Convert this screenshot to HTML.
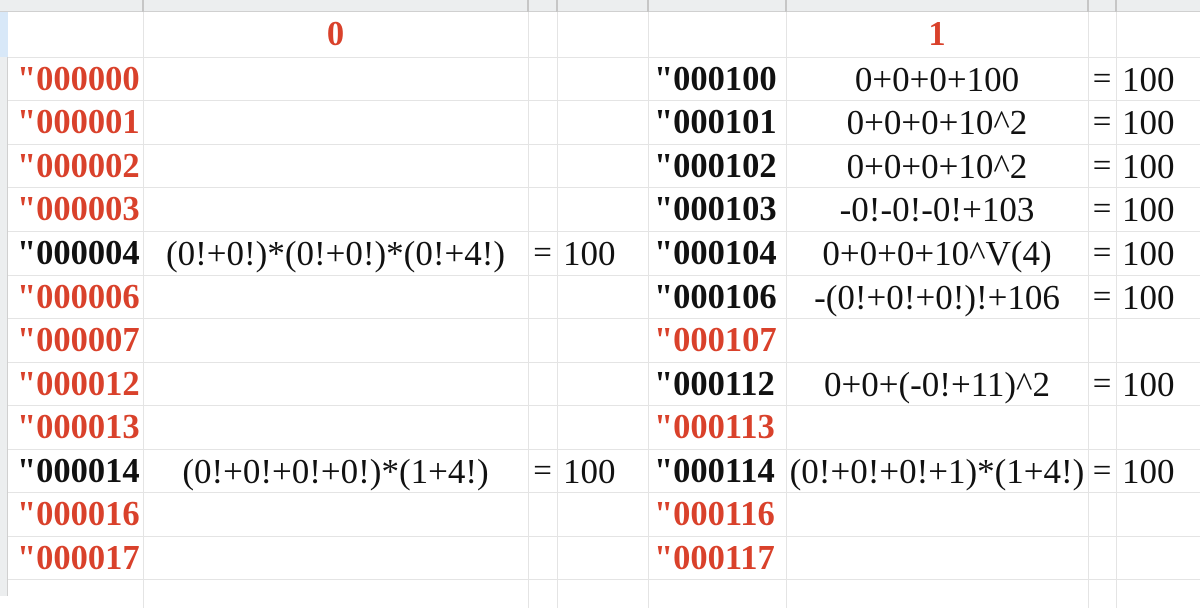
<!DOCTYPE html>
<html><head><meta charset="utf-8"><style>
*{margin:0;padding:0;box-sizing:border-box}
body{width:1200px;height:596px;overflow:hidden;background:#fff;position:relative;font-family:"Liberation Serif",serif;font-size:33px;color:#111}
.hdr{position:absolute;left:0;top:0;width:1200px;height:12px;background:#eceeef;border-bottom:1px solid #d0d0d0}
.rh{position:absolute;left:0;top:12px;width:8px;height:584px;background:#eceeef;border-right:1px solid #d0d0d0}
.vl{position:absolute;top:0;width:1px;height:596px;background:#e4e4e4}
.vh{position:absolute;top:0;width:2px;height:12px;background:#c6c6c6}
.hl{position:absolute;left:8px;width:1192px;height:1px;background:#e4e4e4}
.t{position:absolute;height:43px;line-height:45px;white-space:nowrap}
.f{font-size:35px}
.b{font-weight:bold;font-size:34.5px}
.r{color:#d9412b}
.c{text-align:center}
</style></head><body>
<div class="hdr"></div>
<div class="rh"></div>
<div style="position:absolute;left:0;top:12px;width:8px;height:45px;background:#d8e8f8"></div>
<div class="vh" style="left:142px"></div><div class="vh" style="left:527px"></div><div class="vh" style="left:556px"></div><div class="vh" style="left:647px"></div><div class="vh" style="left:785px"></div><div class="vh" style="left:1087px"></div><div class="vh" style="left:1115px"></div>
<div class="vl" style="left:143px;top:12px"></div><div class="vl" style="left:528px;top:12px"></div><div class="vl" style="left:557px;top:12px"></div><div class="vl" style="left:648px;top:12px"></div><div class="vl" style="left:786px;top:12px"></div><div class="vl" style="left:1088px;top:12px"></div><div class="vl" style="left:1116px;top:12px"></div>
<div class="hl" style="top:57px"></div><div class="hl" style="top:100px"></div><div class="hl" style="top:144px"></div><div class="hl" style="top:187px"></div><div class="hl" style="top:231px"></div><div class="hl" style="top:275px"></div><div class="hl" style="top:318px"></div><div class="hl" style="top:362px"></div><div class="hl" style="top:405px"></div><div class="hl" style="top:449px"></div><div class="hl" style="top:492px"></div><div class="hl" style="top:536px"></div><div class="hl" style="top:579px"></div>

<div class="t b r c" style="left:143px;width:385px;top:12px">0</div>
<div class="t b r c" style="left:786px;width:302px;top:12px">1</div>

<div class="t b r" style="left:17px;top:57px">"000000</div>
<div class="t b r" style="left:17px;top:100px">"000001</div>
<div class="t b r" style="left:17px;top:144px">"000002</div>
<div class="t b r" style="left:17px;top:187px">"000003</div>
<div class="t b" style="left:17px;top:231px">"000004</div>
<div class="t b r" style="left:17px;top:275px">"000006</div>
<div class="t b r" style="left:17px;top:318px">"000007</div>
<div class="t b r" style="left:17px;top:362px">"000012</div>
<div class="t b r" style="left:17px;top:405px">"000013</div>
<div class="t b" style="left:17px;top:449px">"000014</div>
<div class="t b r" style="left:17px;top:492px">"000016</div>
<div class="t b r" style="left:17px;top:536px">"000017</div>

<div class="t c f" style="left:143px;width:385px;top:231px">(0!+0!)*(0!+0!)*(0!+4!)</div>
<div class="t c" style="left:528px;width:29px;top:231px">=</div>
<div class="t f" style="left:563px;top:231px">100</div>
<div class="t c f" style="left:143px;width:385px;top:449px">(0!+0!+0!+0!)*(1+4!)</div>
<div class="t c" style="left:528px;width:29px;top:449px">=</div>
<div class="t f" style="left:563px;top:449px">100</div>

<div class="t b" style="left:654px;top:57px">"000100</div>
<div class="t b" style="left:654px;top:100px">"000101</div>
<div class="t b" style="left:654px;top:144px">"000102</div>
<div class="t b" style="left:654px;top:187px">"000103</div>
<div class="t b" style="left:654px;top:231px">"000104</div>
<div class="t b" style="left:654px;top:275px">"000106</div>
<div class="t b r" style="left:654px;top:318px">"000107</div>
<div class="t b" style="left:654px;top:362px">"000112</div>
<div class="t b r" style="left:654px;top:405px">"000113</div>
<div class="t b" style="left:654px;top:449px">"000114</div>
<div class="t b r" style="left:654px;top:492px">"000116</div>
<div class="t b r" style="left:654px;top:536px">"000117</div>

<div class="t c f" style="left:786px;width:302px;top:57px">0+0+0+100</div>
<div class="t c f" style="left:786px;width:302px;top:100px">0+0+0+10^2</div>
<div class="t c f" style="left:786px;width:302px;top:144px">0+0+0+10^2</div>
<div class="t c f" style="left:786px;width:302px;top:187px">-0!-0!-0!+103</div>
<div class="t c f" style="left:786px;width:302px;top:231px">0+0+0+10^V(4)</div>
<div class="t c f" style="left:786px;width:302px;top:275px">-(0!+0!+0!)!+106</div>
<div class="t c f" style="left:786px;width:302px;top:362px">0+0+(-0!+11)^2</div>
<div class="t c f" style="left:786px;width:302px;top:449px">(0!+0!+0!+1)*(1+4!)</div>

<div class="t c" style="left:1088px;width:28px;top:57px">=</div><div class="t f" style="left:1122px;top:57px">100</div>
<div class="t c" style="left:1088px;width:28px;top:100px">=</div><div class="t f" style="left:1122px;top:100px">100</div>
<div class="t c" style="left:1088px;width:28px;top:144px">=</div><div class="t f" style="left:1122px;top:144px">100</div>
<div class="t c" style="left:1088px;width:28px;top:187px">=</div><div class="t f" style="left:1122px;top:187px">100</div>
<div class="t c" style="left:1088px;width:28px;top:231px">=</div><div class="t f" style="left:1122px;top:231px">100</div>
<div class="t c" style="left:1088px;width:28px;top:275px">=</div><div class="t f" style="left:1122px;top:275px">100</div>
<div class="t c" style="left:1088px;width:28px;top:362px">=</div><div class="t f" style="left:1122px;top:362px">100</div>
<div class="t c" style="left:1088px;width:28px;top:449px">=</div><div class="t f" style="left:1122px;top:449px">100</div>
</body></html>
